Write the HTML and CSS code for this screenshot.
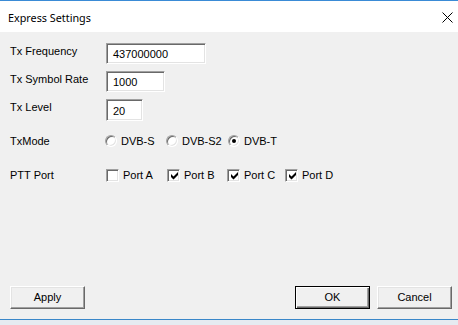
FILE: index.html
```html
<!DOCTYPE html>
<html>
<head>
<meta charset="utf-8">
<link rel="stylesheet" href="styles.css">
</head>
<body>
<div class="window">
  <div class="titlebar">
    <span class="title">Express Settings</span>
    <svg class="close" width="11" height="11" viewBox="0 0 11 11"><path d="M0.5 0.5 L10.5 10.5 M10.5 0.5 L0.5 10.5" stroke="#000" stroke-width="1" fill="none"/></svg>
  </div>
  <div class="content">
    <div class="form">
      <div class="row r1">
        <span class="label">Tx Frequency</span>
        <div class="field w100">437000000</div>
      </div>
      <div class="row r2">
        <span class="label">Tx Symbol Rate</span>
        <div class="field w59">1000</div>
      </div>
      <div class="row r3">
        <span class="label">Tx Level</span>
        <div class="field w37">20</div>
      </div>
      <div class="row r4">
        <span class="label">TxMode</span>
        <div class="options radios">
          <label class="opt"><span class="radio"></span>DVB-S</label>
          <label class="opt"><span class="radio"></span>DVB-S2</label>
          <label class="opt"><span class="radio on"></span>DVB-T</label>
        </div>
      </div>
      <div class="row r5">
        <span class="label">PTT Port</span>
        <div class="options checks">
          <label class="opt"><span class="check"></span>Port A</label>
          <label class="opt"><span class="check on"><svg width="9" height="9" viewBox="0 0 9 9"><path d="M1 3 L3.5 5.5 L8 1 L8 4 L3.5 8.5 L1 6 Z" fill="#000"/></svg></span>Port B</label>
          <label class="opt"><span class="check on"><svg width="9" height="9" viewBox="0 0 9 9"><path d="M1 3 L3.5 5.5 L8 1 L8 4 L3.5 8.5 L1 6 Z" fill="#000"/></svg></span>Port C</label>
          <label class="opt"><span class="check on"><svg width="9" height="9" viewBox="0 0 9 9"><path d="M1 3 L3.5 5.5 L8 1 L8 4 L3.5 8.5 L1 6 Z" fill="#000"/></svg></span>Port D</label>
        </div>
      </div>
    </div>
    <div class="footer">
      <div class="btn">Apply</div>
      <div class="spacer"></div>
      <div class="btn default">OK</div>
      <div class="btn">Cancel</div>
    </div>
  </div>
  <div class="desk"></div>
</div>
</body>
</html>
```
FILE: styles.css
```css
html, body {
  margin: 0;
  padding: 0;
  width: 458px;
  height: 325px;
  overflow: hidden;
  background: #f0f0f0;
}
.window {
  display: flex;
  flex-direction: column;
  height: 325px;
  font-family: "Liberation Sans", Arial, sans-serif;
  font-size: 11px;
  color: #000;
}
.titlebar {
  height: 31px;
  border-top: 1px solid #3a8bd6;
  background: #fff;
  display: flex;
  align-items: center;
  padding: 0 5px 0 8px;
}
.title {
  flex: 1;
  font-family: "Noto Sans", "Open Sans", sans-serif;
  font-size: 10.8px;
  margin-top: 1px;
}
.close {
  display: block;
  margin-top: 1px;
}
.content {
  flex: 1;
  background: #f0f0f0;
  display: flex;
  flex-direction: column;
}
.form {
  padding: 11px 0 0 10px;
  display: flex;
  flex-direction: column;
}
.row {
  display: flex;
  align-items: flex-start;
}
.label {
  width: 96px;
  line-height: 14px;
  padding-top: 1px;
}
.r2 { margin-top: 7px; }
.r3 { margin-top: 7px; }
.r4 { margin-top: 13px; }
.r5 { margin-top: 20px; }
.r4 .label, .r5 .label { padding-top: 0; }
.field {
  box-sizing: border-box;
  height: 21px;
  background: #fff;
  border-top: 1px solid #a0a0a0;
  border-left: 1px solid #a0a0a0;
  border-right: 1px solid #fff;
  border-bottom: 1px solid #fff;
  box-shadow: inset 1px 1px 0 #696969, inset -1px -1px 0 #e3e3e3;
  padding: 4px 0 0 6px;
  line-height: 13px;
}
.w100 { width: 100px; }
.w59 { width: 59px; }
.w37 { width: 37px; height: 22px; padding-top: 5px; }
.options {
  display: grid;
  line-height: 14px;
}
.radios {
  grid-template-columns: 61px 62px auto;
  margin-left: -1px;
}
.checks {
  grid-template-columns: 61px 60px 58px auto;
}
.opt {
  display: flex;
  align-items: center;
  gap: 4px;
}
.radio {
  box-sizing: border-box;
  width: 12px;
  height: 12px;
  border-radius: 50%;
  background: #fff;
  border: 1px solid;
  border-color: #a0a0a0 #fff #fff #a0a0a0;
  box-shadow: inset 1px 1px 0 #696969, inset -1px -1px 0 #e3e3e3;
  position: relative;
}
.radio.on::after {
  content: "";
  position: absolute;
  left: 3px;
  top: 3px;
  width: 4px;
  height: 4px;
  border-radius: 50%;
  background: #000;
}
.check {
  box-sizing: border-box;
  width: 13px;
  height: 13px;
  background: #fff;
  border: 1px solid;
  border-color: #a0a0a0 #fff #fff #a0a0a0;
  box-shadow: inset 1px 1px 0 #696969, inset -1px -1px 0 #e3e3e3;
  display: flex;
  align-items: center;
  justify-content: center;
}
.check svg { display: block; margin: 1px 0 0 1px; }
.footer {
  margin-top: auto;
  display: flex;
  gap: 7px;
  padding: 0 6px 10px 10px;
}
.spacer { flex: 1; }
.btn {
  box-sizing: border-box;
  width: 75px;
  height: 23px;
  background: #f0f0f0;
  border: 1px solid;
  border-color: #fff #696969 #696969 #fff;
  box-shadow: inset -1px -1px 0 #a0a0a0, inset 1px 1px 0 #e3e3e3;
  display: flex;
  align-items: center;
  justify-content: center;
  line-height: 13px;
}
.btn.default {
  border: 1px solid #000;
  box-shadow: inset 1px 1px 0 #fff, inset -1px -1px 0 #696969, inset -2px -2px 0 #a0a0a0;
}
.desk {
  height: 5px;
  border-top: 1px solid #3a87c9;
  background: #e6ebf1;
}
```
